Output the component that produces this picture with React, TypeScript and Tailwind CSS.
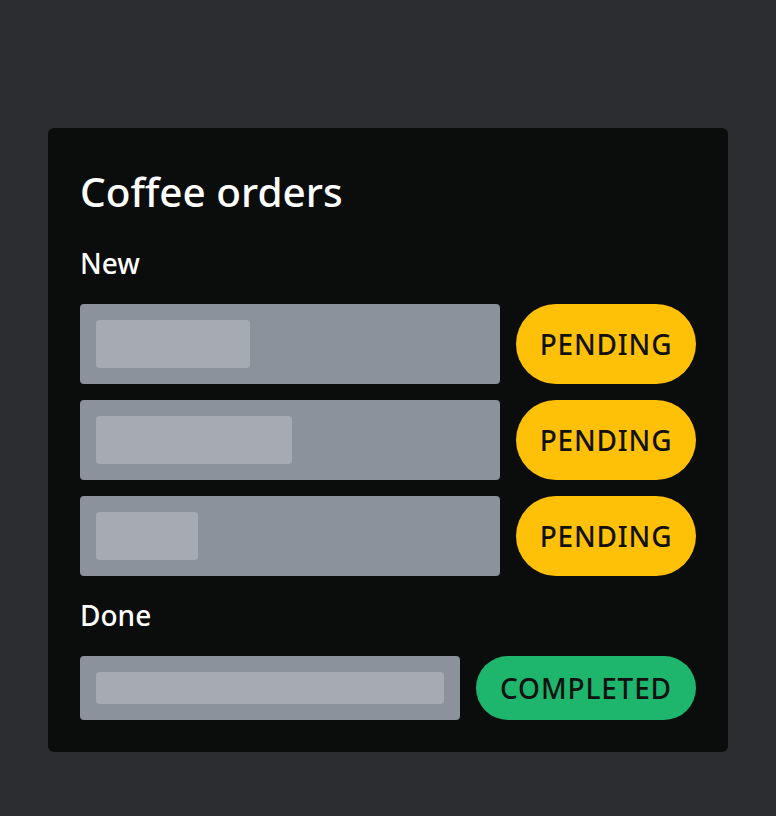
const newOrders = [154, 196, 102];

function Badge({ label, tone, tall }: { label: string; tone: 'pending' | 'done'; tall?: boolean }) {
  return (
    <div
      className={
        'flex shrink-0 items-center justify-center rounded-full text-[28px] font-medium tracking-[0.03em] text-[#111111] ' +
        (tone === 'pending' ? 'w-[180px] bg-[#ffc107] ' : 'w-[220px] bg-[#1db66c] ') +
        (tall ? 'h-20' : 'h-16')
      }
    >
      {label}
    </div>
  );
}

function OrderRow({ width, label, tone, tall }: { width: number; label: string; tone: 'pending' | 'done'; tall?: boolean }) {
  return (
    <div className="flex gap-4">
      <div className={'flex flex-1 items-start rounded bg-[#8b929b] p-4 ' + (tall ? 'h-20' : 'h-16')}>
        <div className={'rounded bg-[#a6abb3] ' + (tall ? 'h-12' : 'h-8')} style={{ width }} />
      </div>
      <Badge label={label} tone={tone} tall={tall} />
    </div>
  );
}

export default function App() {
  return (
    <div className="min-h-[816px] bg-[#2b2d31] pt-32 px-12 font-['Noto_Sans',sans-serif] text-white">
      <div className="rounded-md bg-[#0b0c0c] p-8">
        <h1 className="text-[40.5px] leading-[63px] font-medium">Coffee orders</h1>
        <h2 className="mt-[19px] text-[28px] leading-[42px] font-medium">New</h2>
        <div className="mt-5 flex flex-col gap-4">
          {newOrders.map((w, i) => (
            <OrderRow key={i} width={w} label="PENDING" tone="pending" tall />
          ))}
        </div>
        <h2 className="mt-[18px] text-[28px] leading-[42px] font-medium">Done</h2>
        <div className="mt-5">
          <OrderRow width={348} label="COMPLETED" tone="done" />
        </div>
      </div>
    </div>
  );
}
